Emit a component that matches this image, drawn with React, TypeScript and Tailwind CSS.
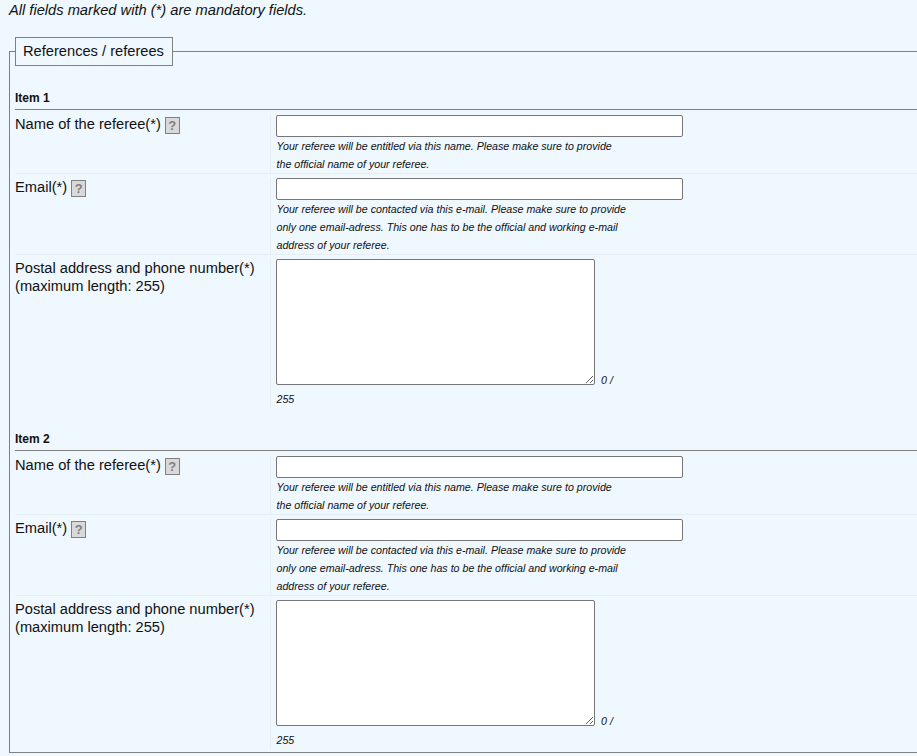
const font = { fontFamily: '"Liberation Sans", Arial, sans-serif' }

function HelpIcon() {
  return (
    <span className="ml-[4px] inline-flex h-[17px] w-[15px] items-center justify-center border border-[#808080] bg-[#d9d9d9] align-[-1px] text-[13px] font-bold leading-none text-[#808080]">
      ?
    </span>
  )
}

function Row({
  label,
  help,
  children,
  last,
}: {
  label: React.ReactNode
  help?: boolean
  children: React.ReactNode
  last?: boolean
}) {
  return (
    <div className={`flex ${last ? '' : 'border-b border-[#e6eef5]'}`}>
      <div className="h-fit w-[255px] shrink-0 pt-[4px] text-[14.67px] leading-[18px] text-[#111]">
        {label}
        {help ? <HelpIcon /> : null}
      </div>
      <div className="mt-[4px] border-l border-[#e6eef5] pl-[5px]">{children}</div>
    </div>
  )
}

function Hint({ lines }: { lines: string[] }) {
  return (
    <div className="ml-[0.5px] text-[10.67px] italic leading-[18px] text-[#111]">
      {lines.map((line) => (
        <div key={line}>{line}</div>
      ))}
    </div>
  )
}

function Item({ title }: { title: string }) {
  return (
    <section>
      <h3 className="pb-[4px] text-[12px] font-bold leading-[14px] text-[#111]">{title}</h3>
      <div className="border-t border-[#808080] pt-[1px]">
        <Row label="Name of the referee(*)" help>
          <input
            type="text"
            className="block h-[22px] w-[407px] rounded-[2px] border border-[#767676] bg-white"
          />
          <Hint
            lines={[
              'Your referee will be entitled via this name. Please make sure to provide',
              'the official name of your referee.',
            ]}
          />
        </Row>
        <Row label="Email(*)" help>
          <input
            type="text"
            className="block h-[22px] w-[407px] rounded-[2px] border border-[#767676] bg-white"
          />
          <Hint
            lines={[
              'Your referee will be contacted via this e-mail. Please make sure to provide',
              'only one email-adress. This one has to be the official and working e-mail',
              'address of your referee.',
            ]}
          />
        </Row>
        <Row
          last
          label={
            <>
              Postal address and phone number(*)
              <br />
              (maximum length: 255)
            </>
          }
        >
          <div className="flex items-end">
            <textarea className="block h-[126px] w-[319px] rounded-[2px] border border-[#767676] bg-white" />
            <span className="ml-[6px] text-[10.67px] italic leading-[10px] text-[#111]">0 /</span>
          </div>
          <div className="mt-[5px] ml-[0.5px] text-[10.67px] italic leading-[18px] text-[#111]">255</div>
        </Row>
      </div>
    </section>
  )
}

export default function App() {
  return (
    <div className="h-[756px] w-[917px] overflow-hidden bg-[#eff7ff]" style={font}>
      <p className="pl-[9px] pt-[2px] text-[14.67px] italic leading-[17px] text-[#111]">
        All fields marked with (*) are mandatory fields.
      </p>
      <fieldset className="ml-[9px] mt-[18px] w-[1000px] border border-[#808080] pb-[3px] pl-[5px]">
        <legend className="border border-[#808080] pl-[7px] pr-[8px] py-[5px] text-[14.67px] leading-[17px] text-[#111]">
          References / referees
        </legend>
        <div className="flex w-[902px] flex-col gap-[24px] pt-[25px]">
          <Item title="Item 1" />
          <Item title="Item 2" />
        </div>
      </fieldset>
    </div>
  )
}
